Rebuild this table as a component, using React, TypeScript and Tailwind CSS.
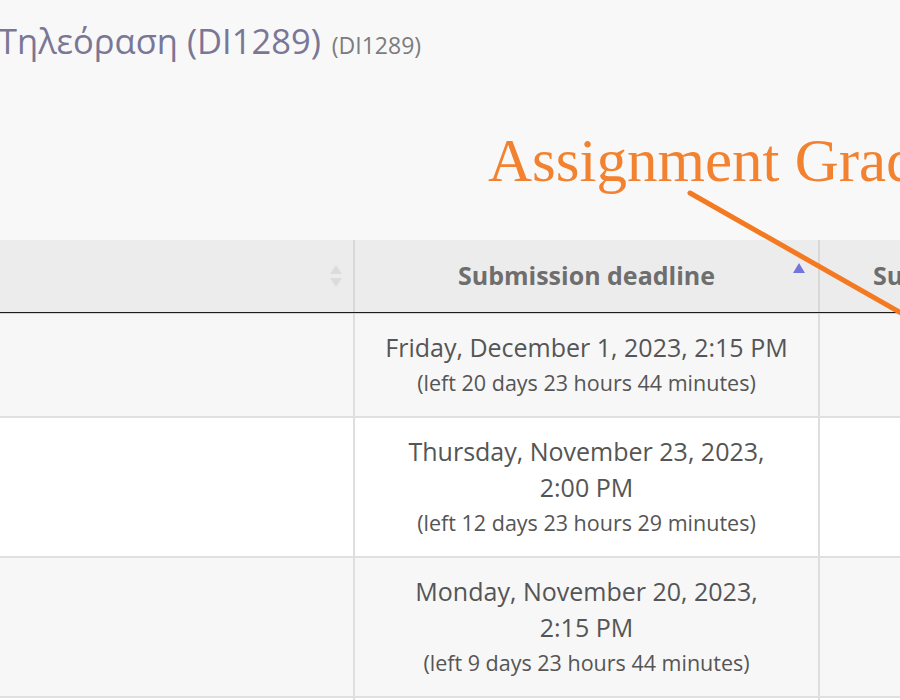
import React from "react";

type Row = { date: string[]; left: string; striped: boolean };

const rows: Row[] = [
  {
    date: ["Friday, December 1, 2023, 2:15 PM"],
    left: "(left 20 days 23 hours 44 minutes)",
    striped: true,
  },
  {
    date: ["Thursday, November 23, 2023,", "2:00 PM"],
    left: "(left 12 days 23 hours 29 minutes)",
    striped: false,
  },
  {
    date: ["Monday, November 20, 2023,", "2:15 PM"],
    left: "(left 9 days 23 hours 44 minutes)",
    striped: true,
  },
  {
    date: [""],
    left: "",
    striped: false,
  },
];

function SortBoth(): JSX.Element {
  return (
    <svg width="14" height="26" viewBox="0 0 14 26" className="shrink-0">
      <path d="M7 2 L13 11 H1 Z" fill="#dcdcdc" />
      <path d="M7 24 L13 15 H1 Z" fill="#dcdcdc" />
    </svg>
  );
}

function SortUp(): JSX.Element {
  return (
    <svg width="14" height="12" viewBox="0 0 14 12" className="shrink-0">
      <path d="M7 1 L13 11 H1 Z" fill="#7474dd" />
    </svg>
  );
}

export default function App(): JSX.Element {
  return (
    <div
      className="relative w-[900px] h-[700px] overflow-hidden bg-[#f8f8f8]"
      style={{ fontFamily: '"Open Sans", "Noto Sans", sans-serif' }}
    >
      {/* course title */}
      <div className="h-[84px] pt-[20px] -ml-[2px] flex items-baseline whitespace-nowrap">
        <span className="text-[34.5px] leading-[42px] text-[#7a7796]">
          Τηλεόραση (DI1289)
        </span>
        <span className="ml-[11px] text-[23px] text-[#7c7c7c]">(DI1289)</span>
      </div>

      {/* annotation label */}
      <div className="h-[156px] pl-[488px] pt-[46px] whitespace-nowrap">
        <span
          className="text-[61px] leading-none text-[#f2822f]"
          style={{ fontFamily: '"Liberation Serif", serif' }}
        >
          Assignment Grade
        </span>
      </div>

      {/* table */}
      <div className="w-[1200px]">
        <div className="grid grid-cols-[353px_465px_1fr] h-[73px] bg-[#ececec] border-b border-[#1c1c1c]">
          <div className="flex items-center justify-end pr-[10px]">
            <SortBoth />
          </div>
          <div className="relative flex items-center justify-center border-l-2 border-[#d8d8d8]">
            <span className="text-[25px] font-bold text-[#6e6e6e]">
              Submission deadline
            </span>
            <div className="absolute right-[12px] top-[22px]">
              <SortUp />
            </div>
          </div>
          <div className="flex items-center pl-[53px] border-l-2 border-[#d8d8d8]">
            <span className="text-[25px] font-bold text-[#6e6e6e]">
              Submission date
            </span>
          </div>
        </div>
        <div className="border-t border-[#d4d4d4]" />

        {rows.map((r, i) => (
          <div
            key={i}
            className={`grid grid-cols-[353px_465px_1fr] border-b-2 border-[#e0e0e0] ${
              r.striped ? "bg-[#f7f7f7]" : "bg-white"
            }`}
          >
            <div />
            <div className="border-l-2 border-[#dedede] py-[15px] px-[10px] text-center text-[#555555] leading-[36px]">
              {r.date.map((d, j) => (
                <div key={j} className="text-[25px]">
                  {d}
                </div>
              ))}
              <div className="text-[21.5px]">{r.left}</div>
            </div>
            <div className="border-l-2 border-[#dedede]" />
          </div>
        ))}
      </div>

      {/* annotation arrow */}
      <svg
        className="absolute inset-0 pointer-events-none"
        width="900"
        height="700"
        viewBox="0 0 900 700"
      >
        <line
          x1="690"
          y1="193"
          x2="910"
          y2="318"
          stroke="#f47a22"
          strokeWidth="5"
          strokeLinecap="round"
        />
      </svg>
    </div>
  );
}
